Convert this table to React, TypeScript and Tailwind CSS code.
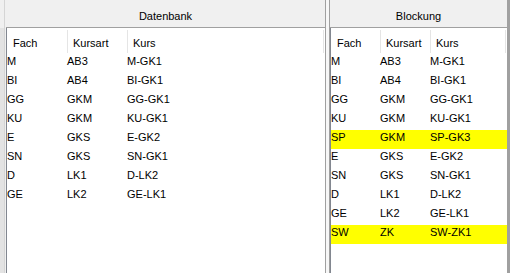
import React from "react";

type Row = { f: string; a: string; k: string; hl?: boolean };

const leftRows: Row[] = [
  { f: "M", a: "AB3", k: "M-GK1" },
  { f: "BI", a: "AB4", k: "BI-GK1" },
  { f: "GG", a: "GKM", k: "GG-GK1" },
  { f: "KU", a: "GKM", k: "KU-GK1" },
  { f: "E", a: "GKS", k: "E-GK2" },
  { f: "SN", a: "GKS", k: "SN-GK1" },
  { f: "D", a: "LK1", k: "D-LK2" },
  { f: "GE", a: "LK2", k: "GE-LK1" },
];

const rightRows: Row[] = [
  { f: "M", a: "AB3", k: "M-GK1" },
  { f: "BI", a: "AB4", k: "BI-GK1" },
  { f: "GG", a: "GKM", k: "GG-GK1" },
  { f: "KU", a: "GKM", k: "KU-GK1" },
  { f: "SP", a: "GKM", k: "SP-GK3", hl: true },
  { f: "E", a: "GKS", k: "E-GK2" },
  { f: "SN", a: "GKS", k: "SN-GK1" },
  { f: "D", a: "LK1", k: "D-LK2" },
  { f: "GE", a: "LK2", k: "GE-LK1" },
  { f: "SW", a: "ZK", k: "SW-ZK1", hl: true },
];

function Sep() {
  return <div className="w-px shrink-0 bg-[#e5e5e5] mt-[2px] mb-[1px]" />;
}

function Panel({
  title,
  rows,
  widthCls,
  c1,
  c2,
  c3,
}: {
  title: string;
  rows: Row[];
  widthCls: string;
  c1: string;
  c2: string;
  c3: string;
}) {
  return (
    <div className={`${widthCls} shrink-0 flex flex-col h-full`}>
      <div className="h-[28px] shrink-0 bg-[#f0f0f0] border-b border-[#a0a0a0] text-center pt-[9px] leading-[15px] text-[#000]">
        {title}
      </div>
      <div className="flex-1 bg-white border-l border-[#828790] flex flex-col">
        <div className="flex h-[26px] shrink-0">
          <div className={`${c1} shrink-0 pl-[6px] pt-[8px] leading-[15px]`}>Fach</div>
          <div className={`${c2} shrink-0 flex`}>
            <Sep />
            <div className="pl-[5px] pt-[8px] leading-[15px]">Kursart</div>
          </div>
          <div className={`${c3} shrink-0 flex`}>
            <Sep />
            <div className="flex-1 pl-[5px] pt-[8px] leading-[15px]">Kurs</div>
            <Sep />
          </div>
        </div>
        {rows.map((r, i) => (
          <div
            key={i}
            className={`flex h-[19px] shrink-0 leading-[15px] ${r.hl ? "bg-[#ffff00]" : ""}`}
          >
            <div className={`${c1} shrink-0`}>{r.f}</div>
            <div className={`${c2} shrink-0`}>{r.a}</div>
            <div className="flex-1">{r.k}</div>
          </div>
        ))}
      </div>
    </div>
  );
}

export default function App() {
  return (
    <div className="w-[510px] h-[273px] flex bg-[#f0f0f0] text-[11px] text-black font-['Liberation_Sans',Arial,sans-serif] overflow-hidden">
      <div className="w-[4px] shrink-0 flex flex-col">
        <div className="h-[28px] bg-[#f0f0f0]" />
        <div className="flex-1 bg-[#e3e3e3]" />
      </div>
      <div className="w-px shrink-0 bg-[#d5d5d5]" />
      <div className="w-px shrink-0 bg-[#f0f0f0]" />
      <Panel
        title="Datenbank"
        rows={leftRows}
        widthCls="w-[319px]"
        c1="w-[60px]"
        c2="w-[60px]"
        c3="w-[197px]"
      />
      <div className="w-px shrink-0 bg-[#a0a0a0]" />
      <div className="w-[3px] shrink-0 bg-[#f7f7f7]" />
      <div className="w-px shrink-0 bg-[#a0a0a0]" />
      <Panel
        title="Blockung"
        rows={rightRows}
        widthCls="w-[177px]"
        c1="w-[49px]"
        c2="w-[50px]"
        c3="w-[76px]"
      />
      <div className="w-[3px] shrink-0 bg-[#a0a0a0]" />
    </div>
  );
}
